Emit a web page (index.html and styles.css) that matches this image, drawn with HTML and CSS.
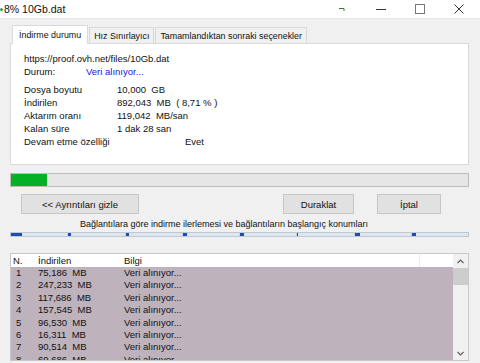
FILE: index.html
```html
<!DOCTYPE html>
<html lang="tr">
<head>
<meta charset="utf-8">
<title>8% 10Gb.dat</title>
<link rel="stylesheet" href="styles.css">
</head>
<body>
<div class="window">
  <div class="titlebar">
    <span class="app-dot"></span>
    <span class="title">8% 10Gb.dat</span>
    <div class="controls">
      <span class="ctl"><svg width="8" height="6" viewBox="0 0 8 6"><path d="M1 2.5H6V5" fill="none" stroke="#2e7d32" stroke-width="1"/></svg></span>
      <span class="ctl"><svg width="10" height="10" viewBox="0 0 10 10"><path d="M0 5.5H10" stroke="#333" stroke-width="1"/></svg></span>
      <span class="ctl"><svg width="10" height="10" viewBox="0 0 10 10"><rect x="0.5" y="0.5" width="9" height="9" fill="none" stroke="#777" stroke-width="1"/></svg></span>
      <span class="ctl"><svg width="10" height="10" viewBox="0 0 10 10"><path d="M0.5 0.5L9.5 9.5M9.5 0.5L0.5 9.5" stroke="#333" stroke-width="1"/></svg></span>
    </div>
  </div>

  <div class="tabs">
    <div class="tab active">İndirme durumu</div>
    <div class="tab">Hız Sınırlayıcı</div>
    <div class="tab">Tamamlandıktan sonraki seçenekler</div>
  </div>

  <div class="panel">
    <div class="url">https://proof.ovh.net/files/10Gb.dat</div>
    <div class="status"><span class="lbl-s">Durum:</span><span class="blue">Veri alınıyor...</span></div>
    <div class="info">
      <div class="row"><span class="lbl">Dosya boyutu</span><span class="val">10,000  GB</span></div>
      <div class="row"><span class="lbl">İndirilen</span><span class="val">892,043  MB  ( 8,71 % )</span></div>
      <div class="row"><span class="lbl">Aktarım oranı</span><span class="val">119,042  MB/san</span></div>
      <div class="row"><span class="lbl">Kalan süre</span><span class="val">1 dak 28 san</span></div>
      <div class="row"><span class="lbl lbl-wide">Devam etme özelliği</span><span class="val">Evet</span></div>
    </div>
  </div>

  <div class="progress"><div class="fill" style="width: 36px"></div></div>

  <div class="buttons">
    <button class="btn btn-details">&lt;&lt; Ayrıntıları gizle</button>
    <button class="btn btn-pause">Duraklat</button>
    <button class="btn btn-cancel">İptal</button>
  </div>

  <div class="caption">Bağlantılara göre indirme ilerlemesi ve bağlantıların başlangıç konumları</div>

  <div class="connbar">
    <div class="seg"><div class="done" style="width: 11px"></div></div>
    <div class="seg"><div class="done" style="width: 3px"></div></div>
    <div class="seg"><div class="done" style="width: 3px"></div></div>
    <div class="seg"><div class="done" style="width: 4px"></div></div>
    <div class="seg"><div class="done" style="width: 4px"></div></div>
    <div class="seg"><div class="done" style="width: 1px"></div></div>
    <div class="seg"><div class="done" style="width: 5px"></div></div>
    <div class="seg"><div class="done" style="width: 4px"></div></div>
  </div>

  <div class="list">
    <div class="grid">
      <div class="head">
        <span class="c-n">N.</span><span class="c-d">İndirilen</span><span class="c-i">Bilgi</span><span class="c-x"></span>
      </div>
      <div class="item"><span class="c-n">1</span><span class="c-d">75,186  MB</span><span class="c-i">Veri alınıyor...</span><span class="c-x"></span></div>
      <div class="item"><span class="c-n">2</span><span class="c-d">247,233  MB</span><span class="c-i">Veri alınıyor...</span><span class="c-x"></span></div>
      <div class="item"><span class="c-n">3</span><span class="c-d">117,686  MB</span><span class="c-i">Veri alınıyor...</span><span class="c-x"></span></div>
      <div class="item"><span class="c-n">4</span><span class="c-d">157,545  MB</span><span class="c-i">Veri alınıyor...</span><span class="c-x"></span></div>
      <div class="item"><span class="c-n">5</span><span class="c-d">96,530  MB</span><span class="c-i">Veri alınıyor...</span><span class="c-x"></span></div>
      <div class="item"><span class="c-n">6</span><span class="c-d">16,311  MB</span><span class="c-i">Veri alınıyor...</span><span class="c-x"></span></div>
      <div class="item"><span class="c-n">7</span><span class="c-d">90,514  MB</span><span class="c-i">Veri alınıyor...</span><span class="c-x"></span></div>
      <div class="item"><span class="c-n">8</span><span class="c-d">69,686  MB</span><span class="c-i">Veri alınıyor...</span><span class="c-x"></span></div>
    </div>
    <div class="scrollbar">
      <span class="arrow"><svg width="7" height="5" viewBox="0 0 7 5"><path d="M0.5 4L3.5 1L6.5 4" fill="none" stroke="#606060" stroke-width="1.2"/></svg></span>
      <div class="thumb"></div>
      <div class="track"></div>
      <span class="arrow"><svg width="7" height="5" viewBox="0 0 7 5"><path d="M0.5 1L3.5 4L6.5 1" fill="none" stroke="#606060" stroke-width="1.2"/></svg></span>
    </div>
  </div>
</div>
</body>
</html>
```

FILE: styles.css
```css
* { box-sizing: border-box; }
html, body { margin: 0; padding: 0; }
body {
  width: 480px;
  height: 363px;
  overflow: hidden;
  background: #f0f0f0;
  font-family: "Liberation Sans", Arial, sans-serif;
  font-size: 9.5px;
  color: #111;
}
.window { width: 480px; height: 363px; overflow: hidden; }

.titlebar {
  height: 19px;
  background: #fff;
  display: flex;
  align-items: center;
  border-bottom: 1px solid #e6e6e6;
}
.app-dot {
  width: 3px; height: 3px;
  border-radius: 50%;
  background: #2aa84a;
  margin-top: 1px;
}
.title {
  font-size: 10.5px;
  margin-left: 1px;
  color: #111;
}
.controls { margin-left: auto; display: flex; padding-right: 2px; }
.ctl { width: 39px; height: 19px; display: flex; align-items: center; justify-content: center; }

.tabs {
  display: flex;
  align-items: flex-end;
  padding-left: 12px;
  margin-top: 6px;
  height: 18px;
  position: relative;
  z-index: 1;
  font-size: 8.9px;
}
.tab {
  height: 16px;
  padding: 0 4px;
  border: 1px solid #d9d9d9;
  border-bottom: none;
  margin-right: 1px;
  background: #f0f0f0;
  display: flex;
  align-items: center;
  white-space: nowrap;
}
.tab.active {
  height: 19px;
  margin-bottom: -1px;
  background: #fff;
  padding: 0 6px;
  border-color: #d9d9d9;
}

.panel {
  margin-left: 10px;
  width: 459px;
  height: 122px;
  background: #fff;
  border: 1px solid #dadada;
  padding: 8px 0 0 13px;
}
.url { height: 13px; line-height: 13px; }
.status { height: 14px; line-height: 14px; display: flex; }
.lbl-s { width: 62px; }
.blue { color: #1515e6; }
.info { margin-top: 4px; }
.row { display: flex; height: 13px; line-height: 13px; }
.lbl { width: 93px; }
.lbl-wide { width: 161px; }
.val { white-space: pre; }

.progress {
  margin: 8px 0 0 10px;
  width: 459px;
  height: 14px;
  background: #e6e6e6;
  border: 1px solid #bcbcbc;
}
.fill { height: 100%; background: #06b025; }

.buttons {
  display: flex;
  margin-top: 7px;
  padding-left: 21px;
  height: 20px;
}
.btn {
  font-family: inherit;
  font-size: 9.5px;
  color: #111;
  background: #e1e1e1;
  border: 1px solid #c6c6c6;
  height: 20px;
  padding: 0;
  margin: 0;
}
.btn-details { width: 118px; }
.btn-pause { width: 71px; margin-left: 144px; }
.btn-cancel { width: 64px; margin-left: 23px; }

.caption {
  text-align: center;
  margin-top: 4px;
  height: 13px;
  line-height: 13px;
  padding-right: 32px;
  font-size: 9px;
}

.connbar {
  margin: 1px 0 0 10px;
  width: 459px;
  height: 5px;
  border: 1px solid #c2c8d2;
  display: flex;
  background: #dde6f2;
}
.seg { flex: 1; height: 100%; border-left: 1px solid #c6d0de; }
.seg:first-child { border-left: none; }
.done { height: 100%; background: #1d4fb0; }

.list {
  margin: 16px 0 0 10px;
  width: 459px;
  height: 108px;
  border: 1px solid #c8c8c8;
  display: flex;
  overflow: hidden;
}
.grid { flex: 1; overflow: hidden; }
.head, .item { display: flex; white-space: pre; }
.head { height: 13px; line-height: 13px; background: #fff; }
.item { height: 12.4px; line-height: 12.4px; background: #beb2bc; }
.c-n { width: 25px; padding-left: 2px; }
.item .c-n { padding-left: 5px; }
.c-d { width: 87px; padding-left: 2px; }
.c-i { width: 297px; padding-left: 1px; }
.head .c-i { border-right: 1px solid #ececec; }
.c-x { flex: 1; }

.scrollbar {
  width: 15px;
  background: #f0f0f0;
  display: flex;
  flex-direction: column;
  align-items: center;
}
.arrow { height: 14px; width: 15px; display: flex; align-items: center; justify-content: center; }
.thumb { width: 15px; height: 17px; background: #cdcdcd; }
.track { flex: 1; }
```
